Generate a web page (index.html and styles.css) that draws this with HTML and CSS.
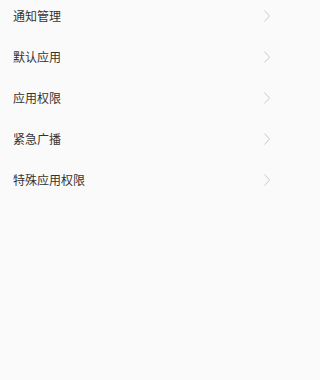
FILE: index.html
```html
<!DOCTYPE html>
<html lang="zh">
<head>
<meta charset="utf-8">
<link rel="stylesheet" href="styles.css">
</head>
<body>
<main class="screen">
<ul class="list">
  <li class="row"><span class="label">通知管理</span><svg class="chev" viewBox="0 0 6 12" width="6" height="12"><path d="M0.5 0.5 L5.5 6 L0.5 11.5" /></svg></li>
  <li class="row"><span class="label">默认应用</span><svg class="chev" viewBox="0 0 6 12" width="6" height="12"><path d="M0.5 0.5 L5.5 6 L0.5 11.5" /></svg></li>
  <li class="row"><span class="label">应用权限</span><svg class="chev" viewBox="0 0 6 12" width="6" height="12"><path d="M0.5 0.5 L5.5 6 L0.5 11.5" /></svg></li>
  <li class="row"><span class="label">紧急广播</span><svg class="chev" viewBox="0 0 6 12" width="6" height="12"><path d="M0.5 0.5 L5.5 6 L0.5 11.5" /></svg></li>
  <li class="row"><span class="label">特殊应用权限</span><svg class="chev" viewBox="0 0 6 12" width="6" height="12"><path d="M0.5 0.5 L5.5 6 L0.5 11.5" /></svg></li>
</ul>
</main>
</body>
</html>
```
FILE: styles.css
```css
html, body {
  margin: 0;
  padding: 0;
  background: #fafafa;
  height: 100%;
}
body {
  font-family: "Noto Sans CJK SC", "Noto Sans", sans-serif;
  color: #333333;
}
.screen {
  width: 286px;
  height: 380px;
  overflow: hidden;
}
.list {
  list-style: none;
  margin: -5px 0 0 0;
  padding: 0;
}
.row {
  height: 41px;
  display: flex;
  align-items: center;
  justify-content: space-between;
  padding: 0 16px 0 13px;
}
.label {
  font-size: 12px;
  line-height: 1;
}
.chev {
  display: block;
  margin-top: 1px;
}
.chev path {
  fill: none;
  stroke: #c4c4c4;
  stroke-width: 0.9;
}
```
